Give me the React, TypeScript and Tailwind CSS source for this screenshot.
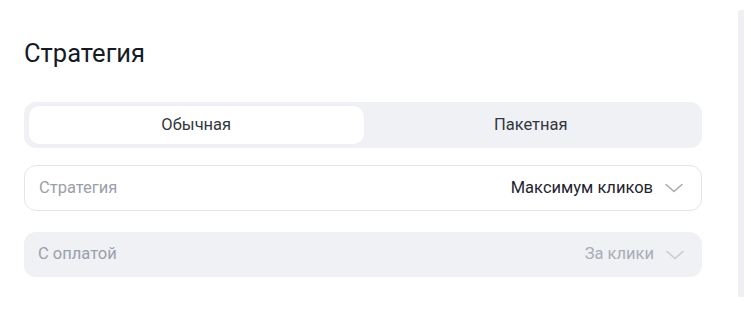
function Chevron({ color }: { color: string }) {
  return (
    <svg width="18" height="10" viewBox="0 0 18 10" fill="none" className={`ml-[12px] ${color}`}>
      <path d="M1 1.5 9 8.5 17 1.5" stroke="currentColor" strokeWidth="1.5" strokeLinecap="round" strokeLinejoin="round" />
    </svg>
  );
}

export default function App() {
  return (
    <div className="flex h-[324px] w-[751px] bg-white font-['Roboto',sans-serif]">
      <div className="flex-1 pl-6 pr-[36px] pt-[37px]">
        <h2 className="text-[25.5px] leading-[32px] text-[#161b26]">Стратегия</h2>

        {/* Segmented */}
        <div className="mt-[33px] flex h-[46px] rounded-[12px] bg-[#eff1f5] p-[4px] pl-[5px]">
          <button className="flex-1 rounded-[10px] bg-white text-[16.5px] text-[#333740] shadow-[0_0_2px_rgba(0,0,0,0.04)]">
            Обычная
          </button>
          <button className="flex-1 text-[16.5px] text-[#333740]">Пакетная</button>
        </div>

        {/* Strategy select */}
        <div className="mt-[17px] flex h-[46px] items-center rounded-[12px] border border-[#e3e5ea] pl-[14px] pr-[18px]">
          <span className="flex-1 text-[16.5px] text-[#9aa0aa]">Стратегия</span>
          <span className="text-[16.5px] text-[#1f2430]">Максимум кликов</span>
          <Chevron color="text-[#a3a8b2]" />
        </div>

        {/* Payment select (disabled) */}
        <div className="mt-[21px] flex h-[45px] items-center rounded-[12px] bg-[#eff1f5] pl-[14px] pr-[18px]">
          <span className="flex-1 text-[16.5px] text-[#9aa0aa]">С оплатой</span>
          <span className="text-[16.5px] text-[#a9adb6]">За клики</span>
          <Chevron color="text-[#c6cad2]" />
        </div>
      </div>

      {/* right edge strip */}
      <div className="mr-[7px] mt-[10px] h-[287px] w-[6px] rounded-tl-[3px] bg-[#eef0f5]" />
    </div>
  );
}
